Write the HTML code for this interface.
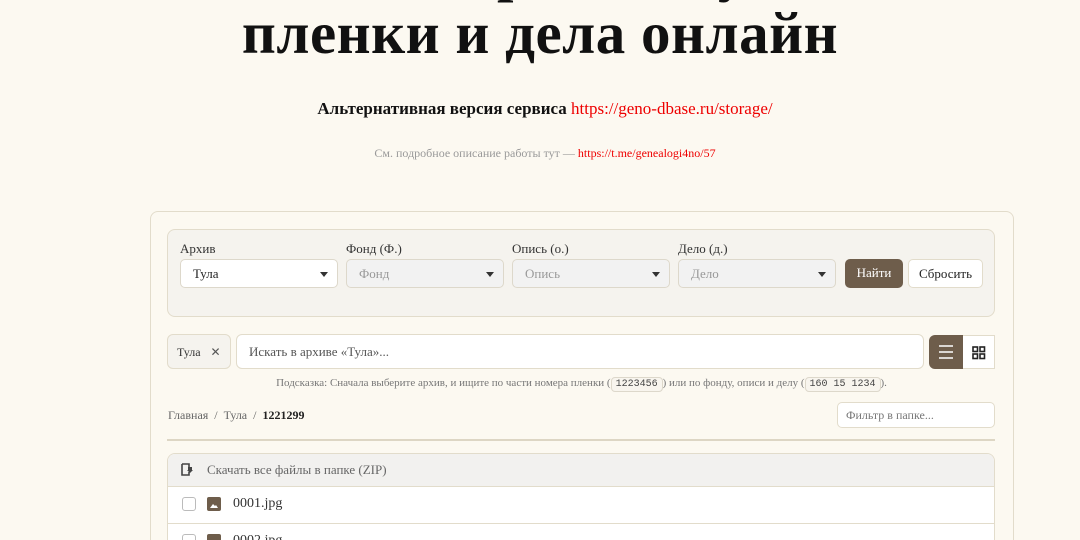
<!DOCTYPE html>
<html style="width:1080px;height:540px;overflow:hidden"><head><meta charset="utf-8"><style>
*{box-sizing:border-box;margin:0;padding:0}
body{width:1080px;height:540px;overflow:hidden;background:#fcf9f1;font-family:"Liberation Serif",serif;position:relative;color:#222}
.a{position:absolute}
h1{position:absolute;left:0;width:1080px;text-align:center;font-size:59px;font-weight:bold;color:#111;line-height:64px;letter-spacing:0.5px}
.card{left:150px;top:211px;width:864px;height:340px;border:1px solid #e2dccb;border-radius:8px;background:#fcf9f1}
.filt{left:167px;top:229px;width:828px;height:88px;border:1px solid #e2dccb;border-radius:8px;background:#f5f3ee}
.lbl{font-size:13px;color:#333;top:241px}
.sel{top:259px;width:158px;height:29px;border:1px solid #ddd8cb;border-radius:5px;background:#f2f2f2;font-size:13px;color:#999;padding:6px 12px}
.sel::after{content:"";position:absolute;right:9px;top:12px;border-left:4px solid transparent;border-right:4px solid transparent;border-top:5px solid #333}
.btn{top:259px;height:29px;border-radius:5px;font-size:13px;padding:6px 0;text-align:center}
code{font-family:"Liberation Mono",monospace;font-size:10px;border:1px solid #ddd8cb;border-radius:4px;padding:1px 4px;background:#f8f5ee;color:#444}
</style></head><body>
<h1 style="top:-62px">Электронные у</h1>
<h1 style="top:1px">пленки и дела онлайн</h1>
<div class="a" style="top:99px;width:1090px;text-align:center;font-size:17px;font-weight:bold;color:#111">Альтернативная версия сервиса <span style="color:#e00;font-weight:normal">https://geno-dbase.ru/storage/</span></div>
<div class="a" style="top:146px;width:1090px;text-align:center;font-size:12px;color:#999">См. подробное описание работы тут — <span style="color:#e00">https://t.me/genealogi4no/57</span></div>
<div class="a card"></div>
<div class="a filt"></div>
<div class="a lbl" style="left:180px">Архив</div>
<div class="a lbl" style="left:346px">Фонд (Ф.)</div>
<div class="a lbl" style="left:512px">Опись (о.)</div>
<div class="a lbl" style="left:678px">Дело (д.)</div>
<div class="a sel" style="left:180px;background:#fff;color:#222">Тула</div>
<div class="a sel" style="left:346px">Фонд</div>
<div class="a sel" style="left:512px">Опись</div>
<div class="a sel" style="left:678px">Дело</div>
<div class="a btn" style="left:845px;width:58px;background:#6e5d4b;color:#fff">Найти</div>
<div class="a btn" style="left:908px;width:75px;background:#fff;border:1px solid #e2dccb;color:#222">Сбросить</div>
<div class="a" style="left:167px;top:334px;width:64px;height:35px;border:1px solid #e2dccb;border-radius:6px;background:#f5f3ee;font-size:12px;padding:10px 9px;color:#333">Тула <span style="margin-left:7px;color:#555">✕</span></div>
<div class="a" style="left:236px;top:334px;width:688px;height:35px;border:1px solid #e2dccb;border-radius:6px;background:#fff;font-size:13px;padding:9px 12px;color:#555">Искать в архиве «Тула»...</div>
<div class="a" style="left:929px;top:335px;width:34px;height:34px;background:#6e5d4b;border-radius:6px 0 0 6px">
<svg width="34" height="34"><g stroke="#fff" stroke-width="1.5"><line x1="10" y1="11" x2="24" y2="11"/><line x1="10" y1="17" x2="24" y2="17"/><line x1="10" y1="23" x2="24" y2="23"/></g></svg></div>
<div class="a" style="left:963px;top:335px;width:32px;height:34px;background:#fff;border:1px solid #e2dccb;border-left:none">
<svg width="32" height="34"><g fill="none" stroke="#222" stroke-width="1.6"><rect x="10" y="11" width="4.5" height="4.5"/><rect x="17" y="11" width="4.5" height="4.5"/><rect x="10" y="18" width="4.5" height="4.5"/><rect x="17" y="18" width="4.5" height="4.5"/></g></svg></div>
<div class="a" style="top:377px;left:0;width:1163px;text-align:center;font-size:11px;color:#777">Подсказка: Сначала выберите архив, и ищите по части номера пленки (<code>1223456</code>) или по фонду, описи и делу (<code>160 15 1234</code>).</div>
<div class="a" style="left:168px;top:408px;font-size:12px;color:#666">Главная &nbsp;/&nbsp; Тула &nbsp;/&nbsp; <b style="color:#222">1221299</b></div>
<div class="a" style="left:837px;top:402px;width:158px;height:26px;border:1px solid #e2dccb;border-radius:5px;background:#fff;font-size:12px;color:#777;padding:5px 8px">Фильтр в папке...</div>
<div class="a" style="left:167px;top:439px;width:828px;height:2px;background:#ddd6c4"></div>
<div class="a" style="left:167px;top:453px;width:828px;height:87px;border:1px solid #e2dccb;border-bottom:none;border-radius:8px 8px 0 0;background:#fff;overflow:hidden">
<div style="height:33px;background:#f2f1ef;border-bottom:1px solid #e2dccb;font-size:13px;color:#666;padding:8px 0 0 39px;position:relative">
<svg style="position:absolute;left:13px;top:9px" width="12" height="13"><path d="M1 1h7v3M1 1v11h7v-3" fill="none" stroke="#444" stroke-width="1.6"/><path d="M6 5h3v-1l3 3-3 3v-1H6z" fill="#444" transform="rotate(90 9 7)"/></svg>Скачать все файлы в папке (ZIP)</div>
<div style="height:37px;border-bottom:1px solid #e2dccb;position:relative;font-size:14px;color:#333;padding:9px 0 0 65px">
<div style="position:absolute;left:14px;top:10px;width:14px;height:14px;border:1px solid #bbb;border-radius:3px"></div>
<div style="position:absolute;left:39px;top:10px;width:14px;height:14px;background:#6e5d4b;border-radius:2px"><svg width="14" height="14"><path d="M3 11l3-4 2 2 1-1 2 3z" fill="#fff"/></svg></div>0001.jpg</div>
<div style="height:37px;position:relative;font-size:14px;color:#333;padding:9px 0 0 65px">
<div style="position:absolute;left:14px;top:10px;width:14px;height:14px;border:1px solid #bbb;border-radius:3px"></div>
<div style="position:absolute;left:39px;top:10px;width:14px;height:14px;background:#6e5d4b;border-radius:2px"></div>0002.jpg</div>
</div>
</body></html>
